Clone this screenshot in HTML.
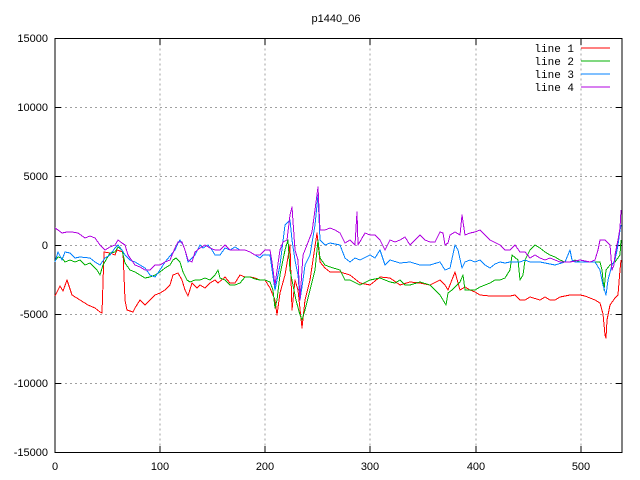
<!DOCTYPE html>
<html><head><meta charset="utf-8"><style>
html,body{margin:0;padding:0;background:#fff;}
svg{display:block;}
text{font-family:"Liberation Sans",sans-serif;font-size:11px;fill:#000;}
.m{font-family:"Liberation Mono",monospace;font-size:11px;}
</style></head><body>
<svg width="640" height="480" viewBox="0 0 640 480" xmlns="http://www.w3.org/2000/svg" shape-rendering="crispEdges">
<g stroke="#a0a0a0" stroke-width="1" stroke-dasharray="2,3" fill="none">
<line x1="160" y1="38.5" x2="160" y2="452.5"/>
<line x1="265" y1="38.5" x2="265" y2="452.5"/>
<line x1="370" y1="38.5" x2="370" y2="452.5"/>
<line x1="476" y1="38.5" x2="476" y2="452.5"/>
<line x1="581" y1="38.5" x2="581" y2="452.5"/>
<line x1="55" y1="107.5" x2="622" y2="107.5"/>
<line x1="55" y1="176.5" x2="622" y2="176.5"/>
<line x1="55" y1="245.5" x2="622" y2="245.5"/>
<line x1="55" y1="314.5" x2="622" y2="314.5"/>
<line x1="55" y1="383.5" x2="622" y2="383.5"/>
</g>
<g stroke="#000" stroke-width="1">
<line x1="55" y1="107.5" x2="61" y2="107.5"/><line x1="55" y1="176.5" x2="61" y2="176.5"/><line x1="55" y1="245.5" x2="61" y2="245.5"/><line x1="55" y1="314.5" x2="61" y2="314.5"/><line x1="55" y1="383.5" x2="61" y2="383.5"/>
<line x1="616" y1="107.5" x2="622" y2="107.5"/><line x1="616" y1="176.5" x2="622" y2="176.5"/><line x1="616" y1="245.5" x2="622" y2="245.5"/><line x1="616" y1="314.5" x2="622" y2="314.5"/><line x1="616" y1="383.5" x2="622" y2="383.5"/>
<line x1="160" y1="446" x2="160" y2="452"/><line x1="265" y1="446" x2="265" y2="452"/><line x1="370" y1="446" x2="370" y2="452"/><line x1="476" y1="446" x2="476" y2="452"/><line x1="581" y1="446" x2="581" y2="452"/>
<line x1="160" y1="39" x2="160" y2="45"/><line x1="265" y1="39" x2="265" y2="45"/><line x1="370" y1="39" x2="370" y2="45"/><line x1="476" y1="39" x2="476" y2="45"/><line x1="581" y1="39" x2="581" y2="45"/>
</g>
<rect x="55" y="38.5" width="567" height="414" fill="none" stroke="#000" stroke-width="1"/>
<g text-anchor="end">
<text x="48" y="42">15000</text><text x="48" y="111">10000</text><text x="48" y="180">5000</text><text x="48" y="249">0</text><text x="48" y="318">-5000</text><text x="48" y="387">-10000</text><text x="48" y="456">-15000</text>
</g>
<g text-anchor="middle">
<text x="55" y="470">0</text><text x="160" y="470">100</text><text x="265" y="470">200</text><text x="370" y="470">300</text><text x="476" y="470">400</text><text x="581" y="470">500</text>
<text x="336" y="22">p1440_06</text>
</g>
<g text-anchor="end">
<text class="m" x="574" y="52">line 1</text><text class="m" x="574" y="65">line 2</text><text class="m" x="574" y="78">line 3</text><text class="m" x="574" y="91">line 4</text>
</g>
<line x1="581" y1="48" x2="610" y2="48" stroke="#ff0000"/>
<line x1="581" y1="61" x2="610" y2="61" stroke="#00b000"/>
<line x1="581" y1="74" x2="610" y2="74" stroke="#0080ff"/>
<line x1="581" y1="87" x2="610" y2="87" stroke="#b000e0"/>
<g fill="none" stroke-width="1" stroke-linejoin="round">
<polyline stroke="#ff0000" points="55,296 60,286 63,291 67,280 72,295 80,300 88,305 95,308 100,312 102,313 104,252 110,253 115,255 117,250 123,252 125,300 127,310 133,312 135,308 140,300 145,305 150,300 155,295 160,293 165,290 170,285 173,275 178,273 182,280 185,290 188,296 192,283 197,288 200,285 205,288 210,283 215,280 218,283 225,277 230,283 235,283 240,275 245,277 250,277 255,278 260,280 265,280 270,288 275,300 277,315 280,293 285,275 290,245 292,310 295,280 298,290 302,328 305,300 310,280 317,233 320,262 325,268 330,272 340,272 350,275 360,283 370,285 380,277 390,278 400,285 410,282 420,283 430,285 440,280 445,285 448,290 455,272 460,290 465,287 470,290 475,292 480,295 490,296 500,296 510,296 515,295 520,300 525,300 530,297 540,300 545,297 550,300 555,300 560,297 570,295 580,295 585,296 590,298 595,300 600,303 603,314 605,335 606,338 607,320 610,305 615,298 618,295 620,270 621,260"/>
<polyline stroke="#00b000" points="55,261 58,257 62,258 65,262 70,260 75,262 80,260 85,265 90,263 97,270 100,275 103,265 110,253 115,252 118,247 122,250 125,263 130,270 135,272 140,275 145,278 150,277 155,275 160,272 165,268 170,265 173,260 176,258 180,262 183,272 187,280 190,282 195,280 200,280 205,278 210,280 215,275 218,270 220,278 225,280 230,285 235,285 240,283 245,277 250,277 255,279 260,280 265,280 270,282 273,290 275,308 277,300 280,275 285,250 288,240 290,270 293,285 296,300 300,315 302,320 305,310 310,290 315,270 318,240 320,258 325,265 330,267 340,270 345,280 350,280 360,285 370,280 380,278 390,282 395,283 400,280 405,285 410,285 420,282 430,285 440,295 446,305 448,293 452,290 460,282 463,275 465,290 470,290 475,290 480,287 485,285 490,283 495,280 500,280 505,278 510,270 512,255 518,260 520,280 523,275 525,260 530,250 535,245 540,248 545,252 550,255 555,257 560,260 565,262 570,262 575,260 580,262 590,262 600,262 602,270 604,290 606,270 610,265 615,262 620,255 621,240"/>
<polyline stroke="#0080ff" points="55,262 58,252 62,260 65,252 70,253 75,258 80,257 90,258 95,262 100,265 105,258 110,255 115,248 118,245 122,250 125,255 130,260 135,262 140,265 145,268 150,275 155,277 160,270 165,262 170,256 175,250 178,243 180,240 183,245 185,250 188,262 192,258 195,255 200,245 203,248 208,245 212,250 215,255 220,255 225,248 230,250 235,247 240,250 245,250 250,252 255,255 260,258 263,255 270,255 275,290 280,265 285,225 290,220 292,240 295,260 298,275 300,300 303,280 305,265 310,255 315,225 318,195 320,240 325,245 330,243 340,245 345,258 350,262 355,258 360,260 370,255 375,258 380,250 385,265 390,260 400,263 410,262 420,265 430,265 440,262 445,270 450,268 455,245 458,250 462,268 465,262 470,260 475,262 480,260 485,265 490,268 495,264 500,262 505,263 510,262 520,262 525,260 530,262 540,262 555,265 565,262 570,250 572,260 575,262 585,262 595,262 600,270 603,285 606,295 608,280 612,265 615,260 618,245 620,230 621,225"/>
<polyline stroke="#b000e0" points="55,228 58,230 62,233 67,232 72,232 78,233 85,238 90,236 95,238 100,245 105,250 110,247 115,245 118,240 122,243 125,245 128,255 130,258 135,265 140,267 145,270 150,270 155,265 160,265 165,262 170,260 175,248 178,242 182,242 185,250 188,260 192,262 195,252 200,248 205,245 210,248 215,250 220,250 225,245 230,250 235,250 240,250 245,250 250,252 255,255 260,255 265,250 270,250 272,262 275,285 280,250 283,242 287,240 290,215 292,207 295,250 298,260 300,300 303,255 307,245 312,232 315,210 318,187 320,230 325,230 330,228 335,230 340,233 345,243 350,240 355,245 357,212 358,245 365,233 370,235 375,235 380,240 385,250 390,240 395,242 400,240 405,237 410,245 415,240 420,235 425,240 430,242 435,242 440,232 443,233 445,245 448,243 450,235 455,232 460,235 462,215 465,235 470,233 475,232 480,230 485,235 490,240 500,245 505,250 510,250 515,245 520,252 525,252 530,258 535,255 540,258 545,260 550,258 555,260 560,262 570,262 580,260 590,262 595,260 598,250 600,240 605,240 610,245 612,270 614,265 615,255 618,240 620,228 621,210"/>
</g>
</svg>
</body></html>
